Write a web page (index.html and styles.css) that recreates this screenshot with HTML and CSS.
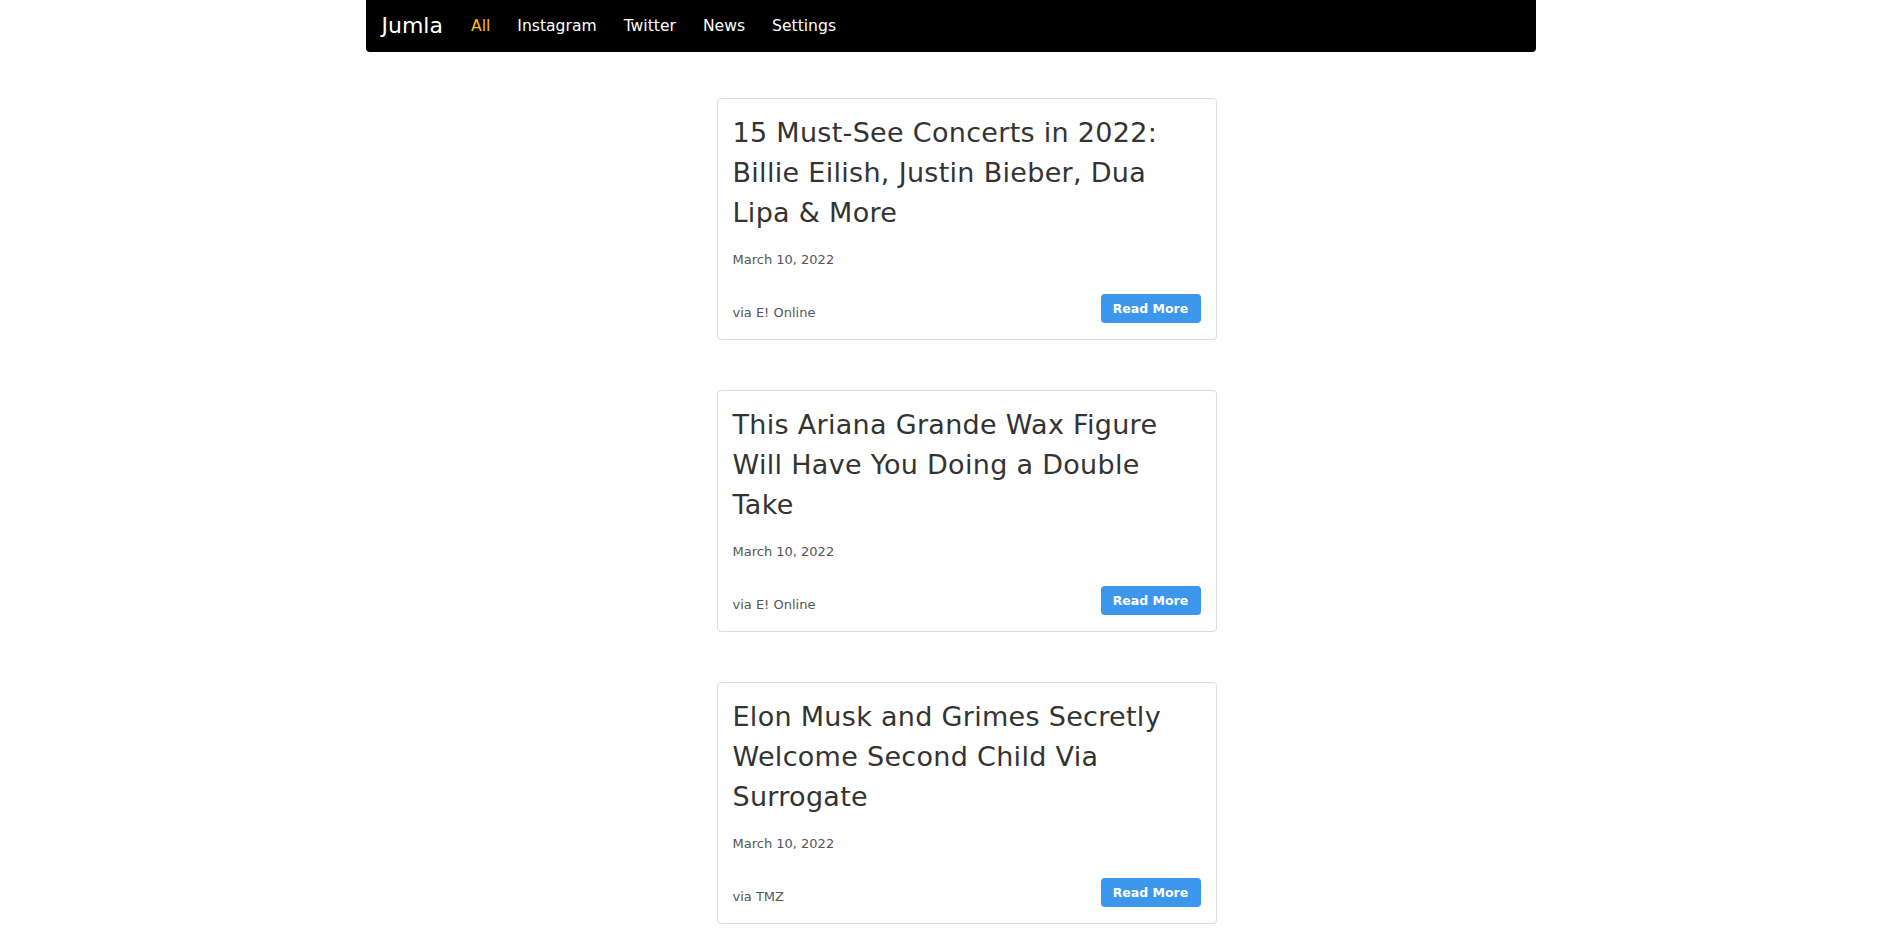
FILE: index.html
```html
<!DOCTYPE html>
<html lang="en">
<head>
<meta charset="utf-8">
<title>Jumla</title>
<link rel="stylesheet" href="styles.css">
</head>
<body>
<nav class="navbar">
  <a class="brand" href="#">Jumla</a>
  <ul class="nav-links">
    <li><a class="nav-link active" href="#">All</a></li>
    <li><a class="nav-link" href="#">Instagram</a></li>
    <li><a class="nav-link" href="#">Twitter</a></li>
    <li><a class="nav-link" href="#">News</a></li>
    <li><a class="nav-link" href="#">Settings</a></li>
  </ul>
</nav>
<main class="feed">
  <article class="card">
    <h3 class="card-title">15 Must-See Concerts in 2022: Billie Eilish, Justin Bieber, Dua Lipa &amp; More</h3>
    <p class="card-date">March 10, 2022</p>
    <div class="card-footer">
      <span class="card-source">via E! Online</span>
      <a class="btn" href="#">Read More</a>
    </div>
  </article>
  <article class="card">
    <h3 class="card-title">This Ariana Grande Wax Figure Will Have You Doing a Double Take</h3>
    <p class="card-date">March 10, 2022</p>
    <div class="card-footer">
      <span class="card-source">via E! Online</span>
      <a class="btn" href="#">Read More</a>
    </div>
  </article>
  <article class="card">
    <h3 class="card-title">Elon Musk and Grimes Secretly Welcome Second Child Via Surrogate</h3>
    <p class="card-date">March 10, 2022</p>
    <div class="card-footer">
      <span class="card-source">via TMZ</span>
      <a class="btn" href="#">Read More</a>
    </div>
  </article>
</main>
</body>
</html>
```
FILE: styles.css
```css
* {
  box-sizing: border-box;
}

body {
  margin: 0;
  font-family: "DejaVu Sans", "Open Sans", sans-serif;
  color: #363636;
  background: #fff;
}

a {
  text-decoration: none;
}

.navbar {
  width: 1170px;
  height: 52px;
  margin: 0 auto;
  background: #000;
  border-radius: 0 0 4px 4px;
  display: flex;
  align-items: center;
  padding: 0 14px;
}

.brand {
  color: #fff;
  font-size: 22px;
  line-height: 30px;
  margin-right: 28px;
  padding-left: 2px;
}

.nav-links {
  list-style: none;
  margin: 0;
  padding: 0;
  display: flex;
  gap: 27px;
}

.nav-link {
  color: #fff;
  font-size: 15.6px;
  line-height: 24px;
}

.nav-link.active {
  color: #ffc107;
}

.feed {
  display: flex;
  flex-direction: column;
  align-items: center;
  gap: 50px;
  padding: 46px 0 40px 32px;
}

.card {
  width: 500px;
  border: 1px solid #dcdcdc;
  border-radius: 4px;
  padding: 14px 15px 16px;
  background: #fff;
}

.card-title {
  margin: 0;
  padding-right: 18px;
  font-size: 27px;
  line-height: 40px;
  font-weight: 400;
  letter-spacing: 0.3px;
  color: #333;
}

.card-date {
  margin: 17px 0 0;
  font-size: 13px;
  line-height: 20px;
  color: #555;
}

.card-footer {
  margin-top: 24px;
  display: flex;
  justify-content: space-between;
  align-items: flex-end;
}

.card-source {
  font-size: 13px;
  line-height: 21px;
  color: #555;
}

.btn {
  display: inline-block;
  width: 100px;
  height: 29px;
  text-align: center;
  background: #3b96ec;
  color: #fff;
  font-size: 12.5px;
  font-weight: 700;
  line-height: 29px;
  border-radius: 4px;
}
```
